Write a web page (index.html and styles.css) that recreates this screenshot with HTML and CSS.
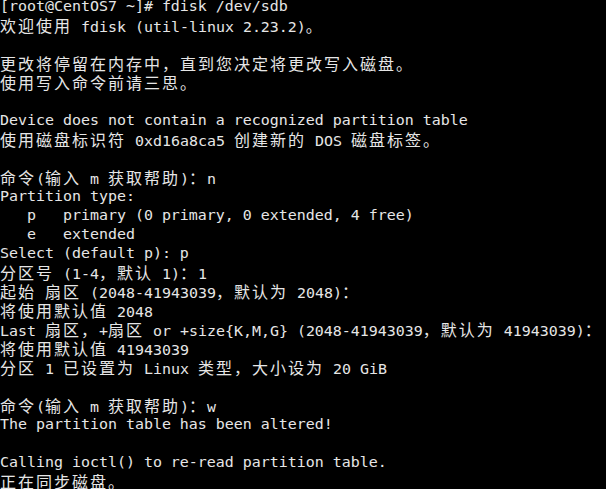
FILE: index.html
```html
<!DOCTYPE html>
<html lang="zh-CN">
<head>
<meta charset="utf-8">
<title>fdisk</title>
<link rel="stylesheet" href="styles.css">
</head>
<body>
<main class="term">
<div class="ln">[root@CentOS7 ~]# fdisk /dev/sdb</div>
<div class="ln"><span class="c">欢迎使用</span> fdisk (util-linux 2.23.2)<span class="c">。</span></div>
<div class="ln"></div>
<div class="ln"><span class="c">更改将停留在内存中，直到您决定将更改写入磁盘。</span></div>
<div class="ln"><span class="c">使用写入命令前请三思。</span></div>
<div class="ln"></div>
<div class="ln">Device does not contain a recognized partition table</div>
<div class="ln"><span class="c">使用磁盘标识符</span> 0xd16a8ca5 <span class="c">创建新的</span> DOS <span class="c">磁盘标签。</span></div>
<div class="ln"></div>
<div class="ln"><span class="c">命令</span>(<span class="c">输入</span> m <span class="c">获取帮助</span>)<span class="c">：</span>n</div>
<div class="ln">Partition type:</div>
<div class="ln">   p   primary (0 primary, 0 extended, 4 free)</div>
<div class="ln">   e   extended</div>
<div class="ln">Select (default p): p</div>
<div class="ln"><span class="c">分区号</span> (1-4<span class="c">，默认</span> 1)<span class="c">：</span>1</div>
<div class="ln"><span class="c">起始</span> <span class="c">扇区</span> (2048-41943039<span class="c">，默认为</span> 2048)<span class="c">：</span></div>
<div class="ln"><span class="c">将使用默认值</span> 2048</div>
<div class="ln">Last <span class="c">扇区，</span>+<span class="c">扇区</span> or +size{K,M,G} (2048-41943039<span class="c">，默认为</span> 41943039)<span class="c">：</span></div>
<div class="ln"><span class="c">将使用默认值</span> 41943039</div>
<div class="ln"><span class="c">分区</span> 1 <span class="c">已设置为</span> Linux <span class="c">类型，大小设为</span> 20 GiB</div>
<div class="ln"></div>
<div class="ln"><span class="c">命令</span>(<span class="c">输入</span> m <span class="c">获取帮助</span>)<span class="c">：</span>w</div>
<div class="ln">The partition table has been altered!</div>
<div class="ln"></div>
<div class="ln">Calling ioctl() to re-read partition table.</div>
<div class="ln"><span class="c">正在同步磁盘。</span></div>
</main>
</body>
</html>
```
FILE: styles.css
```css
html, body {
  margin: 0;
  padding: 0;
  background: #000;
  overflow: hidden;
}
.term {
  margin-top: -3px;
  padding-left: 0;
  color: #e6e6e6;
  font-family: "DejaVu Sans Mono", "Liberation Mono", monospace;
  font-size: 14.95px;
}
.ln {
  height: 19px;
  line-height: 19px;
  white-space: pre;
}
.c {
  font-family: "Noto Sans CJK SC", sans-serif;
  font-size: 16px;
  letter-spacing: 2px;
  line-height: 19px;
}
```
